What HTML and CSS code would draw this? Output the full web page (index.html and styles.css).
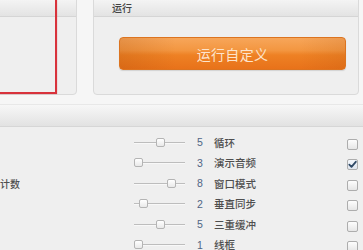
FILE: index.html
```html
<!DOCTYPE html>
<html lang="zh-CN">
<head>
<meta charset="utf-8">
<title>设置</title>
<link rel="stylesheet" href="styles.css">
</head>
<body>
<div class="page">
  <div class="top">
    <section class="panel panel-left">
      <div class="panel-head"></div>
      <div class="panel-body"></div>
      <div class="highlight"></div>
    </section>
    <section class="panel panel-run">
      <div class="panel-head">运行</div>
      <div class="panel-body">
        <button class="run-btn">运行自定义</button>
      </div>
    </section>
  </div>

  <section class="options">
    <div class="options-head"></div>
    <div class="options-body">
      <div class="left-label">帧计数</div>

      <div class="slider r1"><span class="track"></span><span class="thumb" style="left:22px"></span></div>
      <div class="num r1">5</div>
      <div class="label r1">循环</div>
      <div class="check r1"></div>

      <div class="slider r2"><span class="track"></span><span class="thumb" style="left:0px"></span></div>
      <div class="num r2">3</div>
      <div class="label r2">演示音频</div>
      <div class="check r2 checked"><svg viewBox="0 0 11 11" width="11" height="11"><polyline points="2.3,5.6 4.5,7.9 8.8,2.8" fill="none" stroke="#2f4966" stroke-width="1.8" stroke-linecap="round" stroke-linejoin="round"/></svg></div>

      <div class="slider r3"><span class="track"></span><span class="thumb" style="left:33px"></span></div>
      <div class="num r3">8</div>
      <div class="label r3">窗口模式</div>
      <div class="check r3"></div>

      <div class="slider r4"><span class="track"></span><span class="thumb" style="left:5px"></span></div>
      <div class="num r4">2</div>
      <div class="label r4">垂直同步</div>
      <div class="check r4"></div>

      <div class="slider r5"><span class="track"></span><span class="thumb" style="left:22px"></span></div>
      <div class="num r5">5</div>
      <div class="label r5">三重缓冲</div>
      <div class="check r5"></div>

      <div class="slider r6"><span class="track"></span><span class="thumb" style="left:0px"></span></div>
      <div class="num r6">1</div>
      <div class="label r6">线框</div>
      <div class="check r6"></div>
    </div>
  </section>
</div>
</body>
</html>
```

FILE: styles.css
```css
* { box-sizing: border-box; }

html, body { margin: 0; padding: 0; }

body {
  width: 363px;
  height: 250px;
  overflow: hidden;
  background: #f6f6f6;
  font-family: "Noto Sans CJK SC", "Noto Sans", sans-serif;
  color: #555;
}

.page {
  display: flex;
  flex-direction: column;
  gap: 9px;
  margin-top: -5px;
}

.top {
  display: flex;
  gap: 16px;
  margin-left: -30px;
}

.panel {
  position: relative;
  display: flex;
  flex-direction: column;
  border: 1px solid #dadada;
  border-radius: 4px;
  background: #efefef;
}

.panel-left { width: 107px; }
.panel-run { width: 266px; }

.panel-head {
  height: 21px;
  padding: 4px 0 0 18px;
  line-height: 16px;
  font-size: 10px;
  font-weight: 500;
  color: #444;
  background: linear-gradient(#f8f8f8, #e3e3e3);
  border-bottom: 1px solid #d5d5d5;
  border-radius: 3px 3px 0 0;
}

.panel-body {
  height: 77px;
  display: flex;
  align-items: flex-start;
  padding: 20px 12px 0 25px;
}

.highlight {
  position: absolute;
  left: -2px;
  top: -10px;
  right: 19px;
  bottom: 0px;
  border: 2px solid #d8323b;
  box-shadow: 0 0 1px rgba(216, 50, 59, 0.6);
}

.run-btn {
  width: 227px;
  height: 33px;
  padding: 0;
  border: 1px solid #dc7420;
  border-radius: 4px;
  font-family: "Noto Sans CJK SC", "Noto Sans", sans-serif;
  font-size: 14px;
  color: #fde4cc;
  letter-spacing: 0.3px;
  background:
    linear-gradient(to right, rgba(150, 60, 0, 0.18), rgba(150, 60, 0, 0) 25%, rgba(150, 60, 0, 0) 80%, rgba(150, 60, 0, 0.12)),
    linear-gradient(#f7a65a 0%, #f39640 40%, #ee8124 55%, #e8721a 100%);
  box-shadow: 0 1px 1px rgba(0, 0, 0, 0.12);
}

.options {
  margin: 0 -10px;
  display: flex;
  flex-direction: column;
}

.options-head {
  height: 23px;
  background: linear-gradient(#f7f7f7, #e2e2e2);
  border-top: 1px solid #e8e8e8;
  border-bottom: 1px solid #d6d6d6;
}

.options-body {
  background: #efefef;
  height: 123px;
  overflow: hidden;
  padding-top: 5px;
  display: grid;
  grid-template-columns: 144px 51px 29px 133px 11px;
  grid-template-rows: repeat(6, 20.5px);
  align-items: center;
}

.left-label {
  grid-column: 1;
  grid-row: 3;
  width: 30px;
  text-align: right;
  white-space: nowrap;
  font-size: 10px;
  font-weight: 500;
  color: #4f4f4f;
  overflow: hidden;
  direction: rtl;
}

.r1 { grid-row: 1; }
.r2 { grid-row: 2; }
.r3 { grid-row: 3; }
.r4 { grid-row: 4; }
.r5 { grid-row: 5; }
.r6 { grid-row: 6; }

.slider {
  grid-column: 2;
  position: relative;
  height: 9px;
}

.track {
  position: absolute;
  left: 0;
  right: 0;
  top: 4px;
  height: 2px;
  background: #bdbdbd;
  border-bottom: 1px solid #f8f8f8;
}

.thumb {
  position: absolute;
  top: 0;
  width: 9px;
  height: 9px;
  border: 1px solid #b4b4b4;
  border-radius: 2px;
  background: linear-gradient(#ffffff, #e9e9e9);
}

.num {
  grid-column: 3;
  padding-left: 12px;
  font-family: "Liberation Sans", Arial, sans-serif;
  font-size: 10.5px;
  color: #4f6584;
}

.label {
  grid-column: 4;
  font-size: 10.5px;
  font-weight: 500;
  color: #4f4f4f;
  white-space: nowrap;
}

.check {
  grid-column: 5;
  width: 11px;
  height: 11px;
  margin-top: 4px;
  border: 1px solid #adadad;
  border-radius: 2px;
  background: linear-gradient(#fdfdfd, #e6e6e6);
  display: flex;
}

.check svg { margin: -1px; }

.checked {
  background: linear-gradient(#f4f7fb, #dfe5ee);
}
```
